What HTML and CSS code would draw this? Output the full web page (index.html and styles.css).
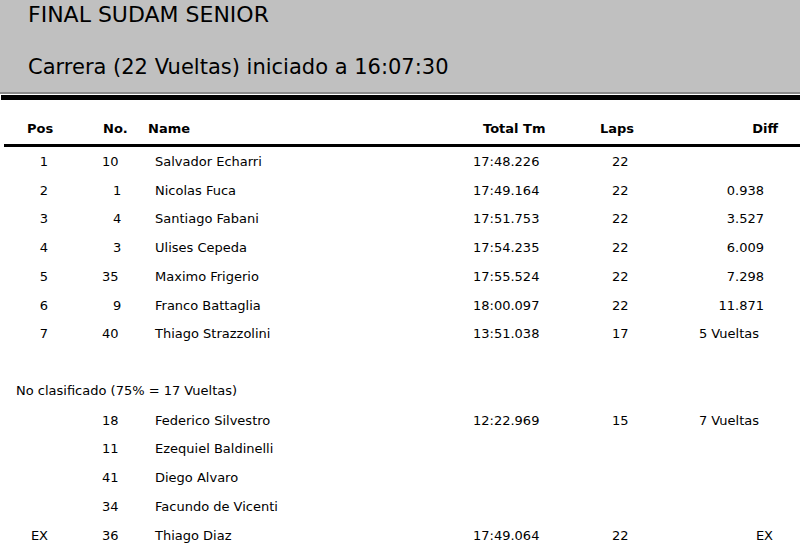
FILE: index.html
```html
<!DOCTYPE html>
<html>
<head>
<meta charset="utf-8">
<link rel="stylesheet" href="styles.css">
</head>
<body>
<div class="banner">
  <div class="title">FINAL SUDAM SENIOR</div>
  <div class="subtitle">Carrera (22 Vueltas) iniciado a 16:07:30</div>
</div>
<div class="bar"></div>
<div class="results">
  <div class="row head">
    <div class="c-pos">Pos</div>
    <div class="c-no">No.</div>
    <div class="c-name">Name</div>
    <div class="c-tm">Total Tm</div>
    <div class="c-laps">Laps</div>
    <div class="c-diff">Diff</div>
  </div>
  <div class="rule"></div>
  <div class="row"><div class="c-pos">1</div><div class="c-no">10</div><div class="c-name">Salvador Echarri</div><div class="c-tm">17:48.226</div><div class="c-laps">22</div><div class="c-diff"></div></div>
  <div class="row"><div class="c-pos">2</div><div class="c-no one">1</div><div class="c-name">Nicolas Fuca</div><div class="c-tm">17:49.164</div><div class="c-laps">22</div><div class="c-diff">0.938</div></div>
  <div class="row"><div class="c-pos">3</div><div class="c-no one">4</div><div class="c-name">Santiago Fabani</div><div class="c-tm">17:51.753</div><div class="c-laps">22</div><div class="c-diff">3.527</div></div>
  <div class="row"><div class="c-pos">4</div><div class="c-no one">3</div><div class="c-name">Ulises Cepeda</div><div class="c-tm">17:54.235</div><div class="c-laps">22</div><div class="c-diff">6.009</div></div>
  <div class="row"><div class="c-pos">5</div><div class="c-no">35</div><div class="c-name">Maximo Frigerio</div><div class="c-tm">17:55.524</div><div class="c-laps">22</div><div class="c-diff">7.298</div></div>
  <div class="row"><div class="c-pos">6</div><div class="c-no one">9</div><div class="c-name">Franco Battaglia</div><div class="c-tm">18:00.097</div><div class="c-laps">22</div><div class="c-diff">11.871</div></div>
  <div class="row"><div class="c-pos">7</div><div class="c-no">40</div><div class="c-name">Thiago Strazzolini</div><div class="c-tm">13:51.038</div><div class="c-laps">17</div><div class="c-diff laps-down">5 Vueltas</div></div>
  <div class="row empty"></div>
  <div class="row note">No clasificado (75% = 17 Vueltas)</div>
  <div class="row"><div class="c-pos"></div><div class="c-no">18</div><div class="c-name">Federico Silvestro</div><div class="c-tm">12:22.969</div><div class="c-laps">15</div><div class="c-diff laps-down">7 Vueltas</div></div>
  <div class="row"><div class="c-pos"></div><div class="c-no">11</div><div class="c-name">Ezequiel Baldinelli</div><div class="c-tm"></div><div class="c-laps"></div><div class="c-diff"></div></div>
  <div class="row"><div class="c-pos"></div><div class="c-no">41</div><div class="c-name">Diego Alvaro</div><div class="c-tm"></div><div class="c-laps"></div><div class="c-diff"></div></div>
  <div class="row"><div class="c-pos"></div><div class="c-no">34</div><div class="c-name">Facundo de Vicenti</div><div class="c-tm"></div><div class="c-laps"></div><div class="c-diff"></div></div>
  <div class="row"><div class="c-pos">EX</div><div class="c-no">36</div><div class="c-name">Thiago Diaz</div><div class="c-tm">17:49.064</div><div class="c-laps">22</div><div class="c-diff ex">EX</div></div>
</div>
</body>
</html>
```
FILE: styles.css
```css
html, body {
  margin: 0;
  padding: 0;
  background: #ffffff;
}
body {
  font-family: "DejaVu Sans", sans-serif;
  color: #000000;
  overflow: hidden;
}
.banner {
  background: #c0c0c0;
  height: 92px;
  border-bottom: 2px solid #8a8a8a;
  padding-left: 28px;
  box-sizing: content-box;
}
.title {
  font-size: 22px;
  line-height: 30px;
}
.subtitle {
  font-size: 21px;
  line-height: 30px;
  padding-top: 22px;
}
.bar {
  margin-top: 1px;
  margin-left: 1px;
  height: 5px;
  background: #000000;
}
.results {
  font-size: 13px;
}
.row {
  display: grid;
  grid-template-columns: 60px 80px 320px 120px 80px 140px;
  height: 28.75px;
  align-items: center;
  white-space: nowrap;
}
.head {
  font-weight: bold;
  margin-top: 14px;
  margin-bottom: 2px;
  height: 28px;
}
.rule {
  height: 3px;
  background: #000000;
  margin-left: 4px;
}
.c-pos { text-align: right; padding-right: 12px; }
.c-no { padding-left: 42px; }
.c-no.one { padding-left: 53px; }
.c-name { padding-left: 15px; }
.c-tm { padding-left: 13px; }
.c-laps { padding-left: 32px; }
.c-diff { text-align: right; padding-right: 36px; }
.c-diff.laps-down { padding-right: 41px; }
.c-diff.ex { padding-right: 27px; }
.head .c-pos { text-align: left; padding-left: 27px; padding-right: 0; }
.head .c-no { padding-left: 43px; }
.head .c-name { padding-left: 8px; }
.head .c-tm { padding-left: 23px; }
.head .c-laps { padding-left: 20px; }
.head .c-diff { padding-right: 22px; }
.note {
  display: block;
  padding-left: 16px;
  line-height: 28.75px;
}
```
